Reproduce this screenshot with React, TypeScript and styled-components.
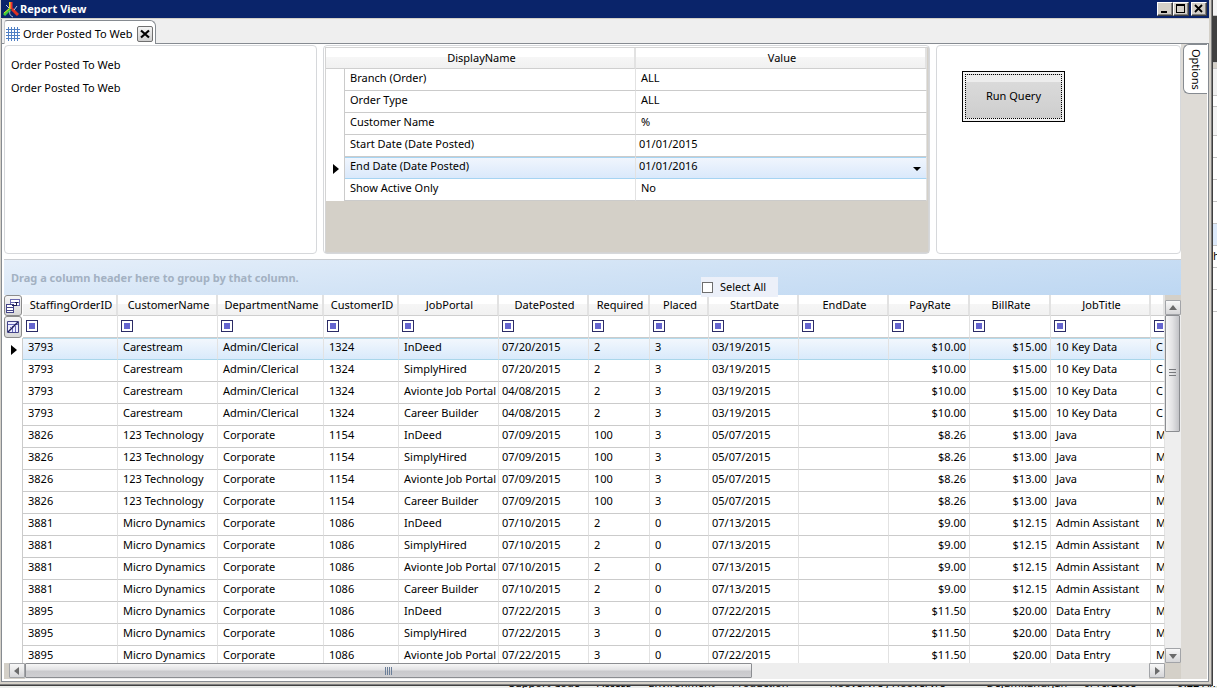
import React from 'react';
import styled, { createGlobalStyle, css } from 'styled-components';

const GlobalStyle = createGlobalStyle`
  * { box-sizing: border-box; }
  html, body { margin: 0; padding: 0; }
  body, button, input, select, table {
    font-family: 'Noto Sans', 'Open Sans', sans-serif;
    font-size: 11px;
    line-height: 16px;
    color: #000;
  }
  button, select { margin: 0; padding: 0; }
`;

const Desktop = styled.div`
  display: grid;
  grid-template-columns: minmax(0, 1fr) 4px;
  grid-template-rows: minmax(0, 1fr) 2px;
  height: 100vh;
  overflow: hidden;
  background: #eceeec;
`;

const Window = styled.main`
  display: flex;
  flex-direction: column;
  min-height: 0;
  background: #d4d0c8;
  border: solid #404040;
  border-width: 0 1px 1px 0;
  box-shadow: inset -1px -1px 0 #808080, inset 1px 0 0 #d4d0c8;
  padding: 0 3px 3px 1px;
`;

const TitleBar = styled.header`
  display: flex;
  align-items: center;
  height: 18px;
  flex: none;
  padding: 0 2px;
  background: #0a246a;
  color: #fff;
`;

const Title = styled.h1`
  flex: 1;
  margin: 0;
  padding-left: 1px;
  font-size: 11px;
  font-weight: 700;
`;

const WindowButton = styled.button<{ $spaced?: boolean }>`
  display: flex;
  width: 16px;
  height: 14px;
  margin-left: ${(p) => (p.$spaced ? '2px' : '0')};
  border: 1px solid;
  border-color: #fff #404040 #404040 #fff;
  background: #d4d0c8;
  box-shadow: inset -1px -1px 0 #808080;
`;

const TabStrip = styled.div`
  display: flex;
  flex: none;
  height: 25px;
  margin-top: 1px;
  padding: 1px 0 0 2px;
  background: #efefef;
  border-left: 1px solid #868b91;
  border-bottom: 1px solid #868b91;
`;

const Tab = styled.div`
  display: flex;
  align-items: center;
  gap: 3px;
  height: 24px;
  padding: 2px 2px 0 1px;
  background: #fff;
  border: 1px solid #868b91;
  border-left-color: #c8cacc;
  border-bottom: 0;
  border-radius: 3px 6px 0 0;
`;

const TabClose = styled.button`
  display: flex;
  align-items: center;
  justify-content: center;
  width: 16px;
  height: 16px;
  margin-left: 1px;
  border: 1px solid #707070;
  border-radius: 2px;
  background: linear-gradient(#f4f4f4, #cfcfcf);
`;

const Body = styled.div`
  display: flex;
  flex: 1;
  min-height: 0;
  background: #fff;
  border: 1px solid #868b91;
  border-top: 0;
  padding: 0 1px 2px 2px;
`;

const Content = styled.div`
  display: flex;
  flex-direction: column;
  flex: 1;
  min-width: 0;
  padding-top: 1px;
`;

const Side = styled.aside`
  flex: none;
  width: 26px;
  padding-left: 2px;
  background: #dedbd6;
`;

const OptionsTab = styled.button`
  display: block;
  width: 24px;
  height: 50px;
  writing-mode: vertical-rl;
  text-align: center;
  background: #fff;
  border: 1px solid #868b91;
  border-right: 0;
  border-radius: 6px 0 0 6px;
`;

const Panels = styled.div`
  display: grid;
  grid-template-columns: 313fr 607fr 245fr;
  gap: 6px;
  flex: none;
  height: 209px;
  margin-bottom: 5px;
`;

const Panel = styled.section<{ $pad: string }>`
  min-width: 0;
  padding: ${(p) => p.$pad};
  background: #fff;
  border: 1px solid #d6d8db;
  border-radius: 4px;
`;

const ReportName = styled.p`
  margin: 0 0 7px;
`;

const ParamBox = styled.div`
  height: 100%;
  padding-right: 1px;
  background: #d4d0c8;
  border: 1px solid #d4d4d4;
`;

const gridBase = css`
  width: 100%;
  table-layout: fixed;
  border-collapse: separate;
  border-spacing: 0;
  background: #fff;
`;

const headerCell = css`
  padding: 0 0 0 3px;
  font-weight: 400;
  text-align: center;
  white-space: nowrap;
  background: linear-gradient(#fff 0 45%, #f6f6f6 45%, #f1f1f1);
  border-bottom: 1px solid #cfcfcf;
  border-right: 2px solid #e2e2e2;
`;

const ParamTable = styled.table`
  ${gridBase}
`;

const ParamHead = styled.th`
  ${headerCell}
  height: 21px;
`;

const ParamCell = styled.td<{ $selected?: boolean; $indent?: number }>`
  height: 22px;
  padding: 0 5px 4px ${(p) => p.$indent ?? 5}px;
  border-bottom: 1px solid #cbcbcb;
  border-right: 1px solid #e2e2e2;
  ${(p) =>
    p.$selected &&
    css`
      border-bottom-color: #a6d4f2;
      background: linear-gradient(#a6d4f2 1px, #f0f5fd 1px, #dae9fb);
    `}
`;

const RowSelector = styled.td`
  padding: 2px 0 0 7px;
  border-right: 1px solid #cbcbcb;
  background: #fff;
  svg { display: block; }
`;

const ValueSelect = styled.select`
  display: block;
  width: 100%;
  height: 16px;
  appearance: none;
  border: 0;
  background: url("data:image/svg+xml,%3Csvg xmlns='http://www.w3.org/2000/svg' width='8' height='4'%3E%3Cpath d='M0 0h8L4 4z'/%3E%3C/svg%3E")
    no-repeat right 0 top 9px;
`;

const RunButton = styled.button`
  width: 103px;
  height: 51px;
  padding: 2px;
  border: 1px solid #000;
  background: #f2f2f2;
`;

const RunFace = styled.span`
  display: flex;
  align-items: center;
  justify-content: center;
  height: 100%;
  padding-bottom: 2px;
  border: 1px dotted #000;
  background: linear-gradient(#ededed 0 7px, #dadada 7px, #cecece);
`;

const GroupBar = styled.div`
  position: relative;
  flex: none;
  height: 36px;
  padding: 10px 7px;
  font-weight: 700;
  color: #a3b1c2;
  border-top: 1px solid #c9ccd0;
  background: linear-gradient(175deg, #e6effa, #d0e2f5 50%, #bdd7f2);
`;

const SelectAll = styled.label`
  position: absolute;
  top: 17px;
  left: 697px;
  display: flex;
  align-items: center;
  gap: 7px;
  width: 77px;
  height: 20px;
  padding-left: 1px;
  font-weight: 400;
  color: #000;
  background: #ecf0f9;
  z-index: 1;
`;

const CheckBox = styled.input`
  appearance: none;
  width: 11px;
  height: 11px;
  margin: 0;
  border: 1px solid #6e6e6e;
  background: #fff;
`;

const GridArea = styled.div`
  display: grid;
  grid-template-columns: minmax(0, 1fr) 16px;
  grid-template-rows: minmax(0, 1fr) 16px;
  flex: 1;
  min-height: 0;
  background: #d4d0c8;
`;

const GridView = styled.div`
  overflow: hidden;
  background: #fff;
`;

const DataTable = styled.table`
  ${gridBase}
`;

const HeadCell = styled.th`
  ${headerCell}
  height: 21px;
  overflow: hidden;
`;

const CornerCell = styled.th`
  padding: 0;
`;

const CornerButton = styled.button<{ $tall?: boolean }>`
  display: flex;
  align-items: center;
  justify-content: center;
  width: 18px;
  height: ${(p) => (p.$tall ? 22 : 21)}px;
  border: 1px solid #8c8c8c;
  border-radius: 3px;
  background: linear-gradient(#f6f6f6, #d8d8d8);
`;

const FilterCell = styled.td`
  height: 22px;
  padding: 0 0 1px 3px;
  overflow: hidden;
  border-right: 1px solid #e2e2e2;
  border-bottom: 1px solid #cbcbcb;
`;

const FilterButton = styled.button`
  display: flex;
  align-items: center;
  justify-content: center;
  width: 12px;
  height: 12px;
  border: 1px solid #2b2b66;
  background: #fff;
  &::after {
    content: '';
    width: 6px;
    height: 6px;
    background: #6565cf;
  }
`;

const DataCell = styled.td<{ $right?: boolean; $indent?: number; $selected?: boolean }>`
  height: 22px;
  padding: 0 ${(p) => (p.$right ? 3 : 0)}px 4px ${(p) => p.$indent ?? 5}px;
  overflow: hidden;
  white-space: nowrap;
  text-align: ${(p) => (p.$right ? 'right' : 'left')};
  border-right: 1px solid #e2e2e2;
  border-bottom: 1px solid #cbcbcb;
  ${(p) =>
    p.$selected &&
    css`
      border-bottom-color: #a9d6ea;
      background: linear-gradient(#b4daec 1px, #f2f7fd 1px, #d9eafb);
    `}
`;

const VScroll = styled.div`
  display: flex;
  flex-direction: column;
  padding-top: 5px;
  background: #d4d0c8;
`;

const HScroll = styled.div`
  display: flex;
  padding-left: 5px;
  background: #d4d0c8;
`;

const Track = styled.div<{ $vertical?: boolean }>`
  display: flex;
  flex-direction: ${(p) => (p.$vertical ? 'column' : 'row')};
  flex: 1;
  min-width: 0;
  min-height: 0;
  background: #eee;
`;

const ArrowButton = styled.button`
  display: flex;
  align-items: center;
  justify-content: center;
  flex: none;
  width: 16px;
  height: 15px;
  border: 1px solid #a2a4a8;
  border-radius: 1px;
  background: linear-gradient(#f8f8f8, #d6d6d8);
`;

const Thumb = styled.div<{ $vertical?: boolean }>`
  display: flex;
  align-items: center;
  justify-content: center;
  border: 1px solid #8b8d91;
  border-radius: 1px;
  ${(p) =>
    p.$vertical
      ? css`
          width: 15px;
          height: 35%;
          background: linear-gradient(90deg, #f6f6f6, #e2e2e4 50%, #c2c3c7);
        `
      : css`
          width: 64.7%;
          height: 15px;
          background: linear-gradient(#f6f6f6, #e2e2e4 45%, #c9c9cc 55%, #cfcfd2);
        `}
`;

const BehindRight = styled.div`
  display: flex;
  flex-direction: column;
  overflow: hidden;
  background: #fff;
`;

const Strip = styled.div<{ $h: number; $bg: string }>`
  flex: none;
  height: ${(p) => p.$h}px;
  background: ${(p) => p.$bg};
  border-bottom: 1px solid #c4c4c4;
  line-height: 20px;
`;

const BehindBottom = styled.div`
  grid-column: 1 / -1;
  display: flex;
  align-items: flex-end;
  gap: 17px;
  height: 2px;
  padding-left: 509px;
  overflow: hidden;
  white-space: nowrap;
  line-height: 10px;
`;

const WideGap = styled.span`
  padding-left: 24px;
  line-height: 10px;
`;

const Pointer = () => (
  <svg width="6" height="10" viewBox="0 0 6 10" aria-hidden="true">
    <path d="M0 0v10l6-5z" fill="#000" />
  </svg>
);

const arrows = {
  up: 'M0 6h8L4 1z',
  down: 'M0 2h8L4 7z',
  left: 'M6 0v8L1 4z',
  right: 'M2 0v8l5-4z',
};

const Arrow = ({ dir }: { dir: keyof typeof arrows }) => (
  <svg width="8" height="8" viewBox="0 0 8 8" aria-hidden="true">
    <path d={arrows[dir]} fill="#6b6b6b" />
  </svg>
);

const AppIcon = () => (
  <svg width="16" height="17" viewBox="0 0 16 17" aria-hidden="true">
    <path d="M7 1v7" stroke="#e6d820" strokeWidth="2" />
    <path d="M8.5 1v7" stroke="#e33" strokeWidth="2" />
    <path d="M7 8L1 14" stroke="#3ccb3c" strokeWidth="3" />
    <path d="M6 8L1 12" stroke="#e6d820" strokeWidth="1" />
    <path d="M9 8l6 6" stroke="#e03020" strokeWidth="3" />
    <path d="M7 10c-1 2 0 5 3 6M3 4l3 3M11 9l3-4" stroke="#b8cbe8" fill="none" />
  </svg>
);

const GridIcon = () => (
  <svg width="14" height="14" viewBox="0 0 14 14" shapeRendering="crispEdges" aria-hidden="true">
    <path d="M2.5 0v14M5.5 0v14M8.5 0v14M11.5 0v14M0 2.5h14M0 5.5h14M0 8.5h14M0 11.5h14" stroke="#4f7fc4" />
  </svg>
);

const ChooserIcon = () => (
  <svg width="14" height="14" viewBox="0 0 14 14" shapeRendering="crispEdges" aria-hidden="true">
    <path d="M4.5 .5h9v6h-9zM4.5 3.5h9" fill="#fff" stroke="#6a6ab0" />
    <path d="M.5 5.5h7v8h-7zM.5 8.5h7M.5 11.5h7" fill="#fff" stroke="#444488" />
    <path d="M6 6.5h4.5v-4M9 3.5h3" fill="none" stroke="#1c1c50" />
  </svg>
);

const ClearFilterIcon = () => (
  <svg width="12" height="12" viewBox="0 0 12 12" aria-hidden="true">
    <path d="M.5 .5h11v11H.5z" fill="#eef" stroke="#444488" />
    <path d="M1 3.5h10M5.5 5v6M8.5 5v6M3 6l3 3" stroke="#6b6bc0" fill="none" />
    <path d="M1 11L11 1" stroke="#22225c" strokeWidth="1.5" />
  </svg>
);

const params = [
  { name: 'Branch (Order)', value: 'ALL' },
  { name: 'Order Type', value: 'ALL' },
  { name: 'Customer Name', value: '%' },
  { name: 'Start Date (Date Posted)', value: '01/01/2015', date: true },
  { name: 'End Date (Date Posted)', value: '01/01/2016', date: true, selected: true },
  { name: 'Show Active Only', value: 'No' },
];

const columns: { title: string; width?: number; indent?: number; right?: boolean }[] = [
  { title: 'StaffingOrderID', width: 95 },
  { title: 'CustomerName', width: 100 },
  { title: 'DepartmentName', width: 106 },
  { title: 'CustomerID', width: 75 },
  { title: 'JobPortal', width: 100 },
  { title: 'DatePosted', width: 90, indent: 3 },
  { title: 'Required', width: 61 },
  { title: 'Placed', width: 59 },
  { title: 'StartDate', width: 90, indent: 3 },
  { title: 'EndDate', width: 90 },
  { title: 'PayRate', width: 81, right: true },
  { title: 'BillRate', width: 81, right: true },
  { title: 'JobTitle', width: 100 },
  { title: '' },
];

const orders = [
  { head: ['3793', 'Carestream', 'Admin/Clerical', '1324'], posted: ['07/20/2015', '07/20/2015', '04/08/2015', '04/08/2015'], rest: ['2', '3', '03/19/2015', '', '$10.00', '$15.00', '10 Key Data', 'C'] },
  { head: ['3826', '123 Technology', 'Corporate', '1154'], posted: ['07/09/2015', '07/09/2015', '07/09/2015', '07/09/2015'], rest: ['100', '3', '05/07/2015', '', '$8.26', '$13.00', 'Java', 'M'] },
  { head: ['3881', 'Micro Dynamics', 'Corporate', '1086'], posted: ['07/10/2015', '07/10/2015', '07/10/2015', '07/10/2015'], rest: ['2', '0', '07/13/2015', '', '$9.00', '$12.15', 'Admin Assistant', 'M'] },
  { head: ['3895', 'Micro Dynamics', 'Corporate', '1086'], posted: ['07/22/2015', '07/22/2015', '07/22/2015'], rest: ['3', '0', '07/22/2015', '', '$11.50', '$20.00', 'Data Entry', 'M'] },
];

const portals = ['InDeed', 'SimplyHired', 'Avionte Job Portal', 'Career Builder'];

const rows = orders.flatMap((o) => o.posted.map((date, i) => [...o.head, portals[i], date, ...o.rest]));

export default function App() {
  return (
    <>
      <GlobalStyle />
      <Desktop>
        <Window>
          <TitleBar>
            <AppIcon />
            <Title>Report View</Title>
            <WindowButton aria-label="Minimize">
              <svg width="14" height="12" viewBox="0 0 14 12"><path d="M3 8h6v2H3z" /></svg>
            </WindowButton>
            <WindowButton aria-label="Maximize">
              <svg width="14" height="12" viewBox="0 0 14 12" shapeRendering="crispEdges">
                <path d="M2.5 1.5h8v8h-8zM2 2.5h9" fill="none" stroke="#000" />
              </svg>
            </WindowButton>
            <WindowButton $spaced aria-label="Close">
              <svg width="14" height="12" viewBox="0 0 14 12"><path d="M3 2l7 7M10 2L3 9" stroke="#000" strokeWidth="1.8" /></svg>
            </WindowButton>
          </TitleBar>
          <TabStrip>
            <Tab>
              <GridIcon />
              <span>Order Posted To Web</span>
              <TabClose aria-label="Close tab">
                <svg width="10" height="10" viewBox="0 0 10 10"><path d="M1 1.5l8 7M9 1.5l-8 7" stroke="#000" strokeWidth="2.2" /></svg>
              </TabClose>
            </Tab>
          </TabStrip>
          <Body>
            <Content>
              <Panels>
                <Panel $pad="11px 6px">
                  <ReportName>Order Posted To Web</ReportName>
                  <ReportName>Order Posted To Web</ReportName>
                </Panel>
                <Panel $pad="1px 0 0 1px">
                  <ParamBox>
                    <ParamTable>
                      <colgroup>
                        <col style={{ width: 19 }} />
                        <col />
                        <col />
                      </colgroup>
                      <thead>
                        <tr>
                          <ParamHead colSpan={2}>DisplayName</ParamHead>
                          <ParamHead>Value</ParamHead>
                        </tr>
                      </thead>
                      <tbody>
                        {params.map((p) => (
                          <tr key={p.name}>
                            <RowSelector>{p.selected && <Pointer />}</RowSelector>
                            <ParamCell $selected={p.selected}>{p.name}</ParamCell>
                            <ParamCell $selected={p.selected} $indent={p.date ? 3 : 5}>
                              {p.selected ? (
                                <ValueSelect aria-label={p.name} defaultValue={p.value}>
                                  <option>{p.value}</option>
                                </ValueSelect>
                              ) : (
                                p.value
                              )}
                            </ParamCell>
                          </tr>
                        ))}
                      </tbody>
                    </ParamTable>
                  </ParamBox>
                </Panel>
                <Panel $pad="25px">
                  <RunButton>
                    <RunFace>Run Query</RunFace>
                  </RunButton>
                </Panel>
              </Panels>
              <GroupBar>
                Drag a column header here to group by that column.
                <SelectAll>
                  <CheckBox type="checkbox" />
                  Select All
                </SelectAll>
              </GroupBar>
              <GridArea>
                <GridView>
                  <DataTable>
                    <colgroup>
                      <col style={{ width: 19 }} />
                      {columns.map((c, i) => (
                        <col key={i} style={{ width: c.width }} />
                      ))}
                    </colgroup>
                    <thead>
                      <tr>
                        <CornerCell>
                          <CornerButton aria-label="Choose columns"><ChooserIcon /></CornerButton>
                        </CornerCell>
                        {columns.map((c, i) => (
                          <HeadCell key={i}>{c.title}</HeadCell>
                        ))}
                      </tr>
                      <tr>
                        <CornerCell as="td">
                          <CornerButton $tall aria-label="Clear filters"><ClearFilterIcon /></CornerButton>
                        </CornerCell>
                        {columns.map((c, i) => (
                          <FilterCell key={i}>
                            <FilterButton aria-label={`Filter ${c.title}`} />
                          </FilterCell>
                        ))}
                      </tr>
                    </thead>
                    <tbody>
                      {rows.map((row, r) => (
                        <tr key={r}>
                          <RowSelector>{r === 0 && <Pointer />}</RowSelector>
                          {row.map((text, i) => (
                            <DataCell key={i} $selected={r === 0} $right={columns[i].right} $indent={columns[i].indent}>
                              {text}
                            </DataCell>
                          ))}
                        </tr>
                      ))}
                    </tbody>
                  </DataTable>
                </GridView>
                <VScroll>
                  <ArrowButton aria-label="Scroll up"><Arrow dir="up" /></ArrowButton>
                  <Track $vertical>
                    <Thumb $vertical>
                      <svg width="7" height="8" viewBox="0 0 7 8" shapeRendering="crispEdges">
                        <path d="M0 .5h7M0 3.5h7M0 6.5h7" stroke="#77797d" />
                      </svg>
                    </Thumb>
                  </Track>
                  <ArrowButton aria-label="Scroll down"><Arrow dir="down" /></ArrowButton>
                </VScroll>
                <HScroll>
                  <ArrowButton aria-label="Scroll left"><Arrow dir="left" /></ArrowButton>
                  <Track>
                    <Thumb>
                      <svg width="8" height="8" viewBox="0 0 8 8" shapeRendering="crispEdges">
                        <path d="M.5 0v8M2.5 0v8M4.5 0v8M6.5 0v8" stroke="#6b7f99" />
                      </svg>
                    </Thumb>
                  </Track>
                  <ArrowButton aria-label="Scroll right"><Arrow dir="right" /></ArrowButton>
                </HScroll>
              </GridArea>
            </Content>
            <Side>
              <OptionsTab>Options</OptionsTab>
            </Side>
          </Body>
        </Window>
        <BehindRight>
          <Strip $h={16} $bg="#f3f3f3" />
          <Strip $h={47} $bg="#404040" />
          <Strip $h={6} $bg="#d4d0c8" />
          <Strip $h={27} $bg="#f0f0f0" />
          <Strip $h={11} $bg="#fff" />
          <Strip $h={29} $bg="#f4f4f4" />
          <Strip $h={22} $bg="#fff" />
          <Strip $h={22} $bg="#fff" />
          <Strip $h={22} $bg="#fff" />
          <Strip $h={22} $bg="#fff" />
          <Strip $h={22} $bg="#ddeafb" />
          <Strip $h={22} $bg="#fff">h</Strip>
          <Strip $h={22} $bg="#fff" />
          <Strip $h={22} $bg="#fff" />
        </BehindRight>
        <BehindBottom>
          <span>Support Code</span>
          <span>Access</span>
          <span>Environment</span>
          <span>Production</span>
          <WideGap>Hoovervre , Hoovervre</WideGap>
          <WideGap>Dejumkundrjan</WideGap>
          <span>9/16/2008</span>
          <WideGap>9:22 AM</WideGap>
        </BehindBottom>
      </Desktop>
    </>
  );
}
